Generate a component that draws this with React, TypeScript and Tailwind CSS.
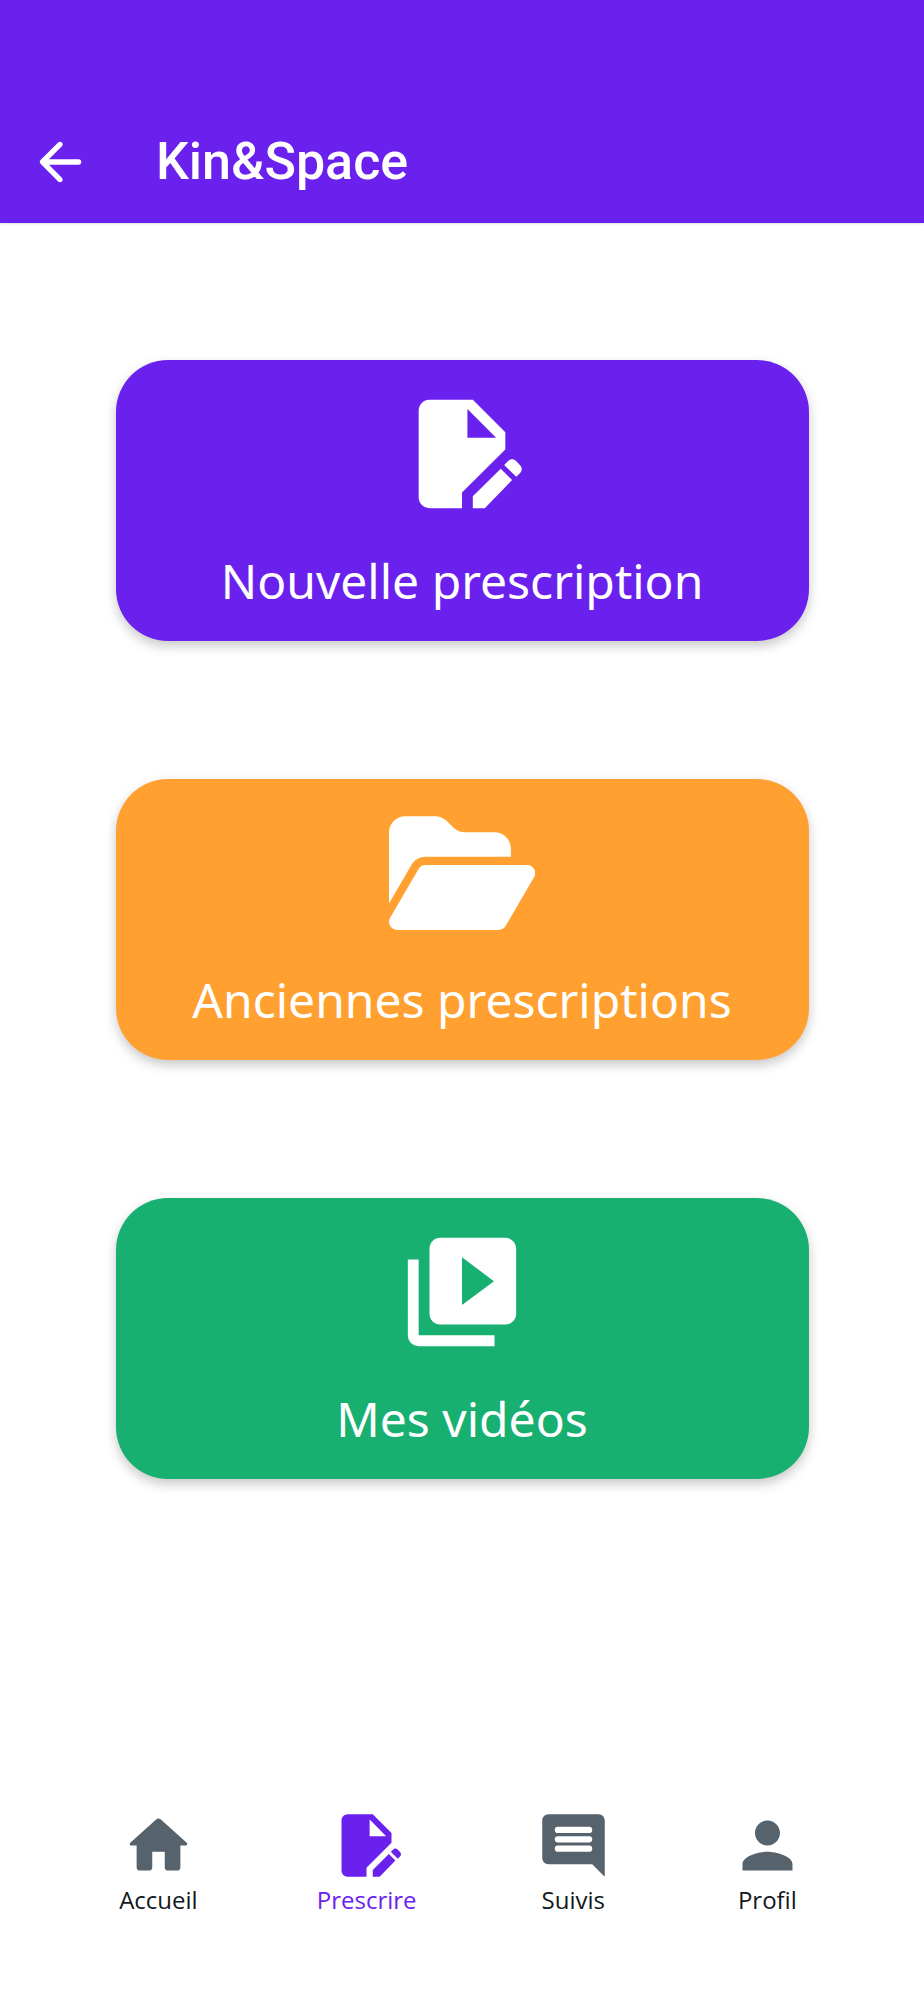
import type { ReactNode } from "react";

function Icon({ className, viewBox = "0 0 24 24", children }: { className: string; viewBox?: string; children: ReactNode }) {
  return (
    <svg viewBox={viewBox} fill="currentColor" fillRule="evenodd" className={className} aria-hidden="true">
      {children}
    </svg>
  );
}

const fileEdit = (
  <>
    <path d="M6 2c-1.1 0-2 .9-2 2v16c0 1.1.9 2 2 2h6v-2.9l8-7.95V8l-6-6H6zm7 1.7L18.3 9H13V3.7z" />
    <path d="M14 22v-2.2l5.15-5.1 2.1 2.1L16.2 22H14z" />
    <path d="M19.78 14.02l.7-.7c.42-.44 1.03-.44 1.45-.06l.8.8c.4.42.4 1.03 0 1.45l-.72.7-2.23-2.19z" />
  </>
);

const folderOpen = (
  <path d="M88.7 223.8L0 375.8V96C0 60.7 28.7 32 64 32H181.5c17 0 33.3 6.7 45.3 18.7l26.5 26.5c12 12 28.3 18.7 45.3 18.7H416c35.3 0 64 28.7 64 64v32H144c-22.8 0-43.8 12.1-55.3 31.8zm27.6 16.1C122.1 230 132.6 224 144 224H544c11.5 0 22 6.1 27.7 16.1s5.7 22.2-.1 32.1l-112 192C453.9 474 443.4 480 432 480H32c-11.5 0-22-6.1-27.7-16.1s-5.7-22.2 .1-32.1l112-192z" />
);

const videoLibrary = (
  <path d="M4 6H2v14c0 1.1.9 2 2 2h14v-2H4V6zm16-4H8c-1.1 0-2 .9-2 2v12c0 1.1.9 2 2 2h12c1.1 0 2-.9 2-2V4c0-1.1-.9-2-2-2zm-8 12.4V5.6l5.9 4.4-5.9 4.4z" />
);

const home = (
  <path d="M10 19v-5h4v5c0 .55.45 1 1 1h3c.55 0 1-.45 1-1v-7h1.7c.46 0 .68-.57.33-.87L12.67 3.6c-.38-.34-.96-.34-1.34 0l-8.36 7.53c-.34.3-.13.87.33.87H5v7c0 .55.45 1 1 1h3c.55 0 1-.45 1-1z" />
);

const comment = (
  <path d="M20 2H4c-1.1 0-2 .9-2 2v12c0 1.1.9 2 2 2h14l4 4V4c0-1.1-.9-2-2-2zM7 6h10a1 1 0 0 1 0 2H7a1 1 0 0 1 0-2zm0 3h10a1 1 0 0 1 0 2H7a1 1 0 0 1 0-2zm0 3h10a1 1 0 0 1 0 2H7a1 1 0 0 1 0-2z" />
);

const person = (
  <path d="M12 12c2.21 0 4-1.79 4-4s-1.79-4-4-4-4 1.79-4 4 1.79 4 4 4zm0 2c-2.67 0-8 1.34-8 4v2h16v-2c0-2.66-5.33-4-8-4z" />
);

const actions = [
  { label: "Nouvelle prescription", color: "bg-[#6b21ee]", icon: fileEdit, viewBox: "0 0 24 24" },
  { label: "Anciennes prescriptions", color: "bg-[#ffa030]", icon: folderOpen, viewBox: "0 0 576 512" },
  { label: "Mes vidéos", color: "bg-[#18b070]", icon: videoLibrary, viewBox: "0 0 24 24" },
];

const tabs = [
  { label: "Accueil", icon: home, active: false },
  { label: "Prescrire", icon: fileEdit, active: true },
  { label: "Suivis", icon: comment, active: false },
  { label: "Profil", icon: person, active: false },
];

export default function App() {
  return (
    <div className="flex min-h-screen flex-col bg-white font-['Open_Sans',sans-serif]">
      <header className="flex items-center gap-16 bg-[#6b21ee] px-7 pt-[121px] pb-5 text-white shadow-sm">
        <button type="button" aria-label="Retour">
          <Icon className="size-16">
            <path d="M19 11H7.83l4.88-4.88c.39-.39.39-1.03 0-1.42-.39-.39-1.02-.39-1.41 0l-6.59 6.59c-.39.39-.39 1.02 0 1.41l6.59 6.59c.39.39 1.02.39 1.41 0 .39-.39.39-1.02 0-1.41L7.83 13H19c.55 0 1-.45 1-1s-.45-1-1-1z" />
          </Icon>
        </button>
        <h1 className="font-[Roboto,sans-serif] text-[52px] leading-[82px] font-medium">Kin&amp;Space</h1>
      </header>

      <main className="flex flex-col items-center gap-[138px] py-[137px]">
        {actions.map((a) => (
          <button
            key={a.label}
            type="button"
            className={`flex w-3/4 flex-col items-center gap-[29px] rounded-[52px] pt-[29px] pb-7 text-white shadow-[0_5px_12px_rgba(0,0,0,0.22)] ${a.color}`}
          >
            <Icon viewBox={a.viewBox} className="h-[130px]">
              {a.icon}
            </Icon>
            <span className="font-['Noto_Sans',sans-serif] text-5xl leading-[65px]">{a.label}</span>
          </button>
        ))}
      </main>

      <nav className="mt-auto flex justify-evenly pb-[84px]">
        {tabs.map((t) => (
          <a
            key={t.label}
            href="#"
            aria-current={t.active ? "page" : undefined}
            className={`flex flex-col items-center ${t.active ? "text-[#6b21ee]" : "text-[#12181c]"}`}
          >
            <Icon className={`size-[75px] ${t.active ? "" : "text-[#56626c]"}`}>{t.icon}</Icon>
            <span className="text-2xl leading-[33px]">{t.label}</span>
          </a>
        ))}
      </nav>
    </div>
  );
}
